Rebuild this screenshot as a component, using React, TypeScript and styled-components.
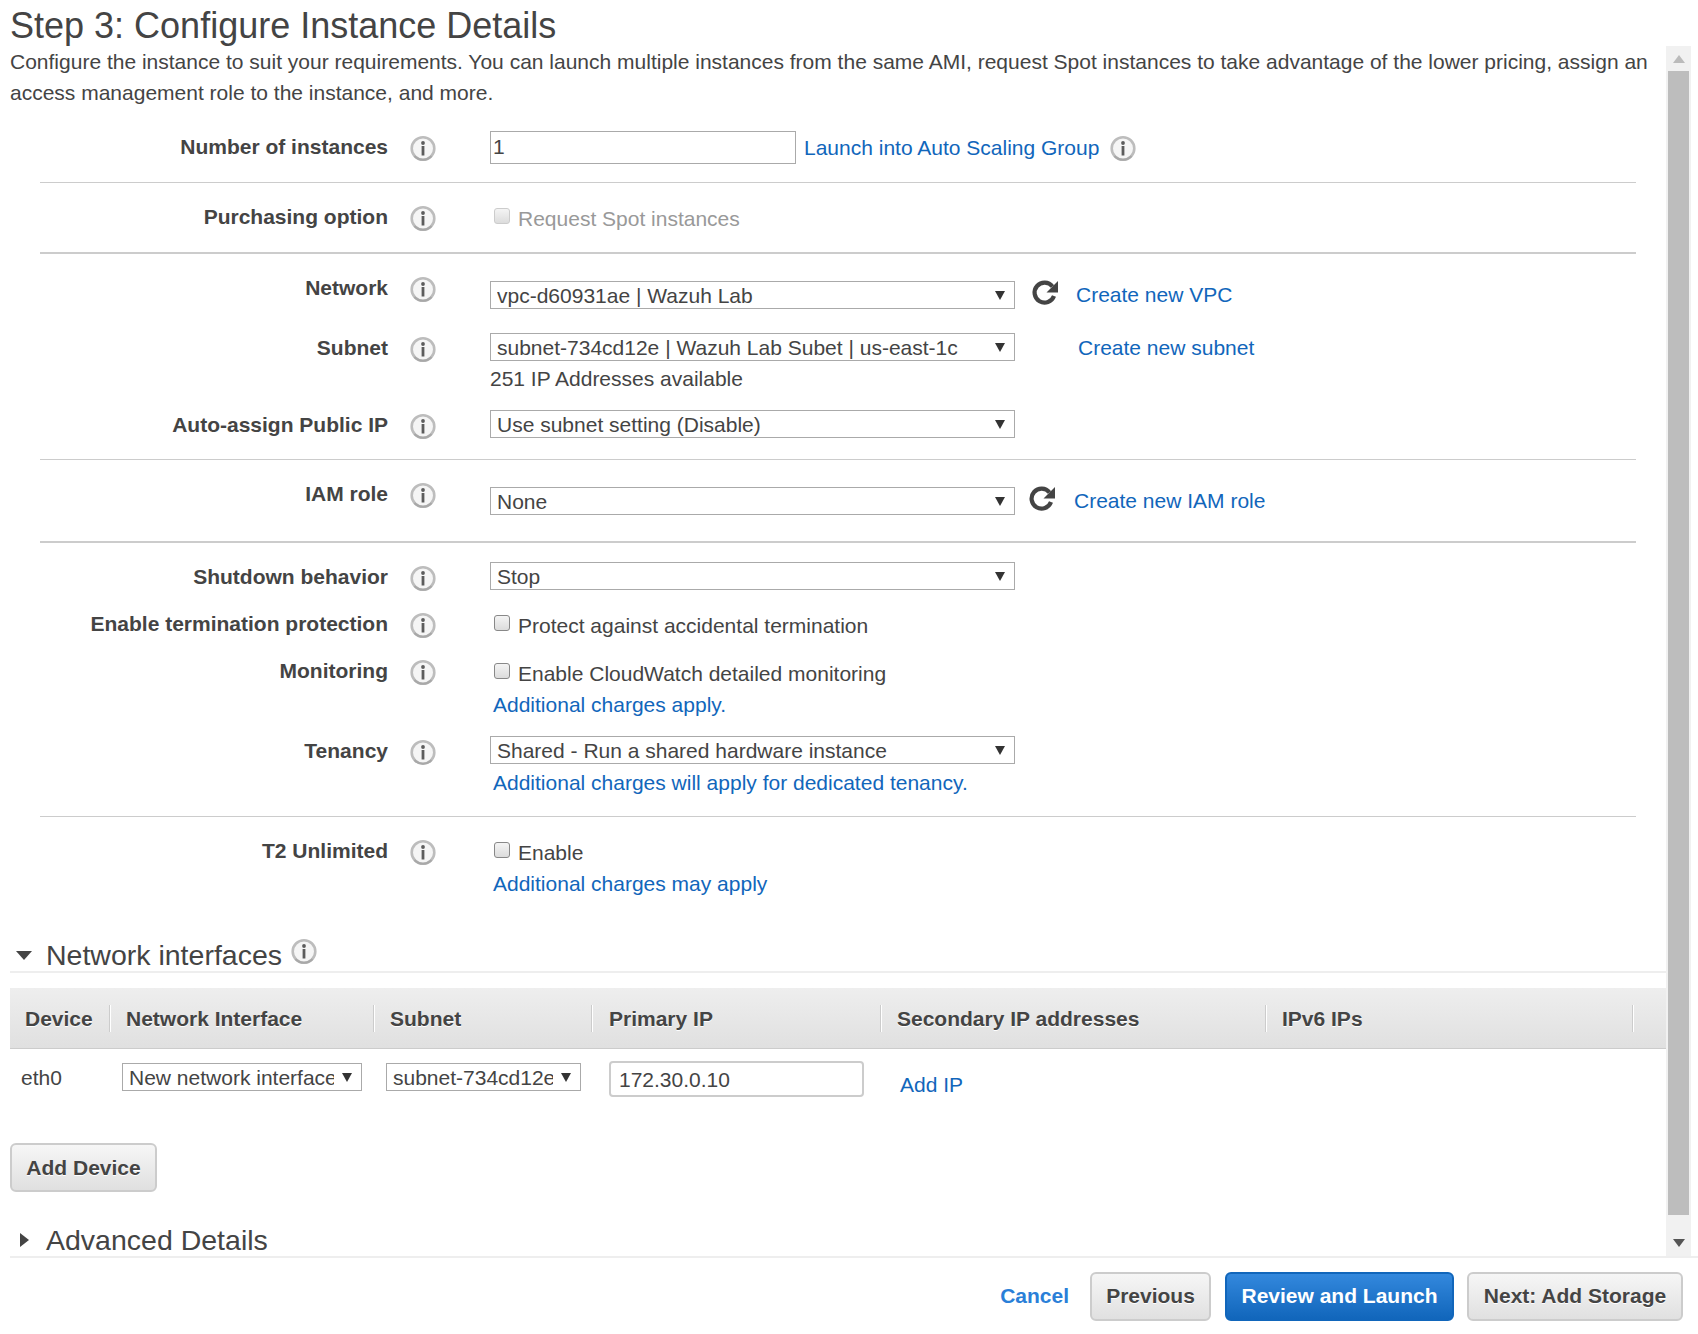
import * as React from 'react';
import styled, { createGlobalStyle } from 'styled-components';

const GlobalStyle = createGlobalStyle`
  html, body {
    margin: 0;
    padding: 0;
    background: #fff;
  }
  * {
    box-sizing: border-box;
  }
`;

const Page = styled.div`
  display: flex;
  flex-direction: column;
  width: 1698px;
  height: 1334px;
  overflow: hidden;
  font-family: 'Liberation Sans', Arial, sans-serif;
  font-size: 21px;
  line-height: 24px;
  color: #444;
`;

const Title = styled.h1`
  height: 46px;
  margin: 0;
  padding-left: 10px;
  font-size: 36px;
  line-height: 52px;
  font-weight: 400;
  color: #444;
`;

const Body = styled.div`
  display: flex;
  height: 1210px;
  padding-right: 7px;
`;

const Content = styled.div`
  flex: 1;
  min-width: 0;
  padding-left: 10px;
`;

const Description = styled.p`
  width: 1650px;
  height: 63px;
  margin: 0;
  line-height: 31px;
`;

const Form = styled.div`
  padding: 0 30px 0 30px;
`;

const Section = styled.div<{ $pad: number; $height: number; $rule?: number }>`
  height: ${({ $height }) => $height}px;
  padding-top: ${({ $pad }) => $pad}px;
  border-bottom: ${({ $rule = 0 }) => ($rule ? `${$rule}px solid #ccc` : 'none')};
`;

const Row = styled.div<{ $height: number }>`
  display: grid;
  grid-template-columns: 348px 22px 80px 1fr;
  height: ${({ $height }) => $height}px;
`;

const Label = styled.div<{ $top?: number }>`
  padding-top: ${({ $top = 0 }) => $top}px;
  text-align: right;
  font-weight: 700;
  color: #444;
  white-space: nowrap;
`;

const InfoSlot = styled.div<{ $top?: number }>`
  grid-column: 3;
  padding-top: ${({ $top = 0 }) => $top}px;
`;

const Controls = styled.div`
  display: flex;
  flex-direction: column;
  align-items: flex-start;
`;

const Inline = styled.div<{ $top?: number }>`
  display: flex;
  align-items: center;
  margin-top: ${({ $top = 0 }) => $top}px;
  white-space: nowrap;
`;

const CheckLine = styled.div<{ $top: number }>`
  display: flex;
  align-items: center;
  padding-top: ${({ $top }) => $top}px;
  white-space: nowrap;
`;

const NumberInput = styled.div`
  width: 306px;
  height: 33px;
  padding-left: 2px;
  border: 1px solid #aaa;
  line-height: 30px;
`;

const SelectBox = styled.div<{ $width?: number; $top?: number }>`
  display: flex;
  align-items: center;
  justify-content: space-between;
  flex: none;
  width: ${({ $width = 525 }) => $width}px;
  height: 28px;
  margin-top: ${({ $top = 0 }) => $top}px;
  padding: 0 6px;
  border: 1px solid #aaa;
  background: #fff;
`;

const SelectText = styled.span`
  flex: 1;
  min-width: 0;
  padding-top: 1px;
  overflow: hidden;
  white-space: nowrap;
`;

const Caret = styled.svg`
  flex: none;
  width: 10px;
  height: 10px;
  margin: 0 3px 0 8px;
  fill: #333;
`;

const Link = styled.a<{ $left?: number; $top?: number }>`
  margin-left: ${({ $left = 0 }) => $left}px;
  margin-top: ${({ $top = 0 }) => $top}px;
  color: #16b;
  text-decoration: none;
  white-space: nowrap;
`;

const Hint = styled.div`
  height: 24px;
  margin-top: 6px;
  white-space: nowrap;
`;

const Check = styled.span<{ $disabled?: boolean }>`
  flex: none;
  width: 16px;
  height: 16px;
  margin: -7px 8px 0 4px;
  border: 1px solid ${({ $disabled }) => ($disabled ? '#ccc' : '#888')};
  border-radius: 3px;
  background: linear-gradient(#f4f4f4, #dcdcdc);
`;

const CheckText = styled.span<{ $disabled?: boolean }>`
  color: ${({ $disabled }) => ($disabled ? '#999' : '#444')};
`;

// the last heading has no rule of its own: the footer's top border sits right under it
const SectionHeading = styled.div<{ $pad: number; $ruled?: boolean }>`
  display: flex;
  align-items: center;
  height: 36px;
  padding: ${({ $pad }) => $pad}px 0 0 4px;
  border-bottom: ${({ $ruled }) => ($ruled ? '2px solid #eee' : 'none')};
  font-size: 28.5px;
  line-height: 34px;
  color: #444;
`;

const Arrow = styled.svg`
  flex: none;
  width: 20px;
  height: 14px;
  margin-right: 12px;
  fill: #444;
`;

const HeadingInfo = styled.span`
  display: flex;
  margin: -6px 0 0 9px;
`;

const LinkInfo = styled.span`
  display: flex;
  margin: 2px 0 0 11px;
`;

const RefreshSlot = styled.span<{ $left: number }>`
  display: flex;
  flex: none;
  margin: -6px 0 0 ${({ $left }) => $left}px;
`;

const TableHead = styled.div`
  display: grid;
  grid-template-columns: 100px 264px 218px 289px 385px 367px 1fr;
  align-items: center;
  height: 61px;
  margin-top: 15px;
  border-bottom: 1px solid #ccc;
  background: linear-gradient(#eeeeee, #e0e0e0);
`;

const HeadCell = styled.div<{ $pad?: number }>`
  height: 27px;
  padding-left: ${({ $pad = 16 }) => $pad}px;
  border-right: 1px solid #ccc;
  box-shadow: 1px 0 0 #fff;
  font-weight: 700;
  line-height: 27px;
  white-space: nowrap;
  text-shadow: 0 1px 0 #fff;
`;

const TableRow = styled.div`
  display: grid;
  grid-template-columns: 100px 264px 218px 289px 385px;
  height: 94px;
`;

const DeviceCell = styled.div`
  padding: 17px 0 0 11px;
`;

const SelectCell = styled.div<{ $left: number }>`
  padding: 14px 0 0 ${({ $left }) => $left}px;
`;

const IpCell = styled.div`
  padding: 12px 0 0 17px;
`;

const IpInput = styled.div`
  width: 255px;
  height: 36px;
  padding-left: 8px;
  border: 2px solid #ccc;
  border-radius: 4px;
  line-height: 33px;
`;

const AddIpCell = styled.div`
  padding: 24px 0 0 19px;
`;

const Button = styled.button<{ $primary?: boolean; $width: number; $left?: number }>`
  flex: none;
  width: ${({ $width }) => $width}px;
  height: 49px;
  margin-left: ${({ $left = 0 }) => $left}px;
  padding: 0;
  border: 2px solid ${({ $primary }) => ($primary ? '#16b' : '#ccc')};
  border-radius: 6px;
  background: ${({ $primary }) =>
    $primary ? 'linear-gradient(#3388dd, #1166bb)' : 'linear-gradient(#f6f6f6, #e0e0e0)'};
  color: ${({ $primary }) => ($primary ? '#fff' : '#444')};
  font-family: inherit;
  font-size: 21px;
  font-weight: 700;
  text-shadow: ${({ $primary }) => ($primary ? 'none' : '0 1px 0 #fff')};
`;

const AddDeviceWrap = styled.div`
  height: 77px;
`;

const Scrollbar = styled.div`
  display: flex;
  flex-direction: column;
  flex: none;
  width: 25px;
  background: #f1f1f1;
`;

const ScrollButton = styled.div<{ $height: number; $pad?: number }>`
  display: flex;
  align-items: center;
  justify-content: center;
  flex: none;
  height: ${({ $height }) => $height}px;
  padding-top: ${({ $pad = 0 }) => $pad}px;
`;

const ScrollThumb = styled.div`
  flex: 1;
  margin: 0 2px;
  background: #bdbdbd;
`;

const ScrollCaret = styled.svg<{ $color: string }>`
  width: 12px;
  height: 8px;
  fill: ${({ $color }) => $color};
`;

const Footer = styled.div`
  display: flex;
  align-items: center;
  justify-content: flex-end;
  height: 78px;
  margin-left: 10px;
  padding-right: 15px;
  border-top: 2px solid #eee;
`;

const Cancel = styled.a`
  margin-right: 21px;
  color: #2a7fd8;
  font-weight: 700;
  text-decoration: none;
`;

function InfoIcon() {
  return (
    <svg width="26" height="27" viewBox="0 0 26 27">
      <circle cx="13" cy="13.5" r="11.3" fill="#f5f5f5" stroke="#bdbdbd" strokeWidth="2.6" />
      <path d="M4.5 21a11.5 11.5 0 0 0 17 0" fill="none" stroke="#a8a8a8" strokeWidth="2" />
      <circle cx="13" cy="8" r="1.9" fill="#5c5c5c" />
      <rect x="11.6" y="11" width="2.8" height="9.5" fill="#5c5c5c" />
    </svg>
  );
}

function RefreshIcon() {
  return (
    <svg width="28" height="27" viewBox="0 0 28 27">
      <path d="M21.5 7.5A10 10 0 1 0 23 17" fill="none" stroke="#444" strokeWidth="4.2" />
      <path d="M27 2v11.5H15.5z" fill="#444" />
    </svg>
  );
}

function SelectField({ value, width, top }: { value: string; width?: number; top?: number }) {
  return (
    <SelectBox $width={width} $top={top}>
      <SelectText>{value}</SelectText>
      <Caret viewBox="0 0 10 10">
        <path d="M0 1h10L5 10z" />
      </Caret>
    </SelectBox>
  );
}

function Field({
  label,
  height,
  labelTop = 0,
  children,
}: {
  label: string;
  height: number;
  labelTop?: number;
  children: React.ReactNode;
}) {
  return (
    <Row $height={height}>
      <Label $top={labelTop}>{label}</Label>
      <InfoSlot $top={labelTop}>
        <InfoIcon />
      </InfoSlot>
      <Controls>{children}</Controls>
    </Row>
  );
}

function CheckField({
  text,
  disabled,
  top = 2,
}: {
  text: string;
  disabled?: boolean;
  top?: number;
}) {
  return (
    <CheckLine $top={top}>
      <Check $disabled={disabled} />
      <CheckText $disabled={disabled}>{text}</CheckText>
    </CheckLine>
  );
}

export default function App() {
  return (
    <Page>
      <GlobalStyle />
      <Title>Step 3: Configure Instance Details</Title>
      <Body>
        <Content>
          <Description>
            Configure the instance to suit your requirements. You can launch multiple instances from
            the same AMI, request Spot instances to take advantage of the lower pricing, assign an
            access management role to the instance, and more.
          </Description>
          <Form>
            <Section $pad={22} $height={74} $rule={1}>
              <Field label="Number of instances" height={33} labelTop={4}>
                <Inline>
                  <NumberInput>1</NumberInput>
                  <Link $left={8}>Launch into Auto Scaling Group</Link>
                  <LinkInfo>
                    <InfoIcon />
                  </LinkInfo>
                </Inline>
              </Field>
            </Section>
            <Section $pad={22} $height={71} $rule={2}>
              <Field label="Purchasing option" height={30}>
                <CheckField text="Request Spot instances" disabled />
              </Field>
            </Section>
            <Section $pad={22} $height={206} $rule={1}>
              <Field label="Network" height={57}>
                <Inline $top={5}>
                  <SelectField value="vpc-d60931ae | Wazuh Lab" />
                  <RefreshSlot $left={16}>
                    <RefreshIcon />
                  </RefreshSlot>
                  <Link $left={17}>Create new VPC</Link>
                </Inline>
              </Field>
              <Field label="Subnet" height={77} labelTop={3}>
                <Inline>
                  <SelectField value="subnet-734cd12e | Wazuh Lab Subet | us-east-1c" />
                  <Link $left={63} $top={1}>
                    Create new subnet
                  </Link>
                </Inline>
                <Hint>251 IP Addresses available</Hint>
              </Field>
              <Field label="Auto-assign Public IP" height={30} labelTop={3}>
                <SelectField value="Use subnet setting (Disable)" />
              </Field>
            </Section>
            <Section $pad={22} $height={83} $rule={2}>
              <Field label="IAM role" height={40}>
                <Inline $top={5}>
                  <SelectField value="None" />
                  <RefreshSlot $left={13}>
                    <RefreshIcon />
                  </RefreshSlot>
                  <Link $left={18}>Create new IAM role</Link>
                </Inline>
              </Field>
            </Section>
            <Section $pad={19} $height={274} $rule={1}>
              <Field label="Shutdown behavior" height={50} labelTop={3}>
                <SelectField value="Stop" />
              </Field>
              <Field label="Enable termination protection" height={47}>
                <CheckField text="Protect against accidental termination" />
              </Field>
              <Field label="Monitoring" height={77}>
                <CheckField text="Enable CloudWatch detailed monitoring" top={3} />
                <Link $left={3} $top={7}>
                  Additional charges apply.
                </Link>
              </Field>
              <Field label="Tenancy" height={60} labelTop={3}>
                <SelectField value="Shared - Run a shared hardware instance" />
                <Link $left={3} $top={7}>
                  Additional charges will apply for dedicated tenancy.
                </Link>
              </Field>
            </Section>
            <Section $pad={22} $height={120}>
              <Field label="T2 Unlimited" height={70}>
                <CheckField text="Enable" />
                <Link $left={3} $top={7}>
                  Additional charges may apply
                </Link>
              </Field>
            </Section>
          </Form>
          <SectionHeading $pad={1} $ruled>
            <Arrow viewBox="0 0 20 14">
              <path d="M2 3h16l-8 9z" />
            </Arrow>
            Network interfaces
            <HeadingInfo>
              <InfoIcon />
            </HeadingInfo>
          </SectionHeading>
          <TableHead>
            <HeadCell $pad={15}>Device</HeadCell>
            <HeadCell>Network Interface</HeadCell>
            <HeadCell>Subnet</HeadCell>
            <HeadCell $pad={17}>Primary IP</HeadCell>
            <HeadCell>Secondary IP addresses</HeadCell>
            <HeadCell>IPv6 IPs</HeadCell>
          </TableHead>
          <TableRow>
            <DeviceCell>eth0</DeviceCell>
            <SelectCell $left={12}>
              <SelectField value="New network interface" width={240} />
            </SelectCell>
            <SelectCell $left={12}>
              <SelectField value="subnet-734cd12e" width={195} />
            </SelectCell>
            <IpCell>
              <IpInput>172.30.0.10</IpInput>
            </IpCell>
            <AddIpCell>
              <Link>Add IP</Link>
            </AddIpCell>
          </TableRow>
          <AddDeviceWrap>
            <Button $width={147}>Add Device</Button>
          </AddDeviceWrap>
          <SectionHeading $pad={3}>
            <Arrow viewBox="0 0 20 14">
              <path d="M6 0l9 7-9 7z" />
            </Arrow>
            Advanced Details
          </SectionHeading>
        </Content>
        <Scrollbar>
          <ScrollButton $height={25}>
            <ScrollCaret $color="#bbb" viewBox="0 0 12 8">
              <path d="M6 0l6 8H0z" />
            </ScrollCaret>
          </ScrollButton>
          <ScrollThumb />
          <ScrollButton $height={41} $pad={14}>
            <ScrollCaret $color="#555" viewBox="0 0 12 8">
              <path d="M0 0h12L6 8z" />
            </ScrollCaret>
          </ScrollButton>
        </Scrollbar>
      </Body>
      <Footer>
        <Cancel>Cancel</Cancel>
        <Button $width={121}>Previous</Button>
        <Button $primary $width={229} $left={14}>
          Review and Launch
        </Button>
        <Button $width={216} $left={13}>
          Next: Add Storage
        </Button>
      </Footer>
    </Page>
  );
}
